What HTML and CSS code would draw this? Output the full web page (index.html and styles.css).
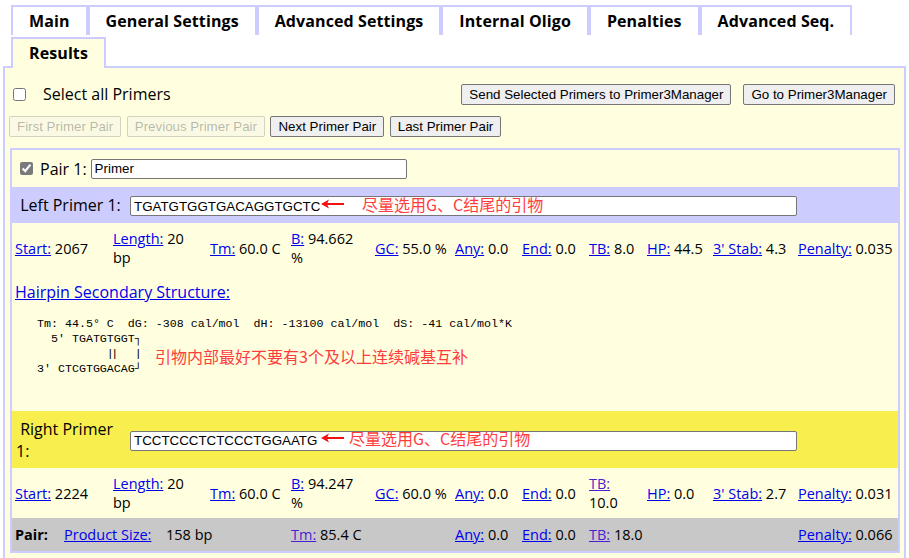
FILE: index.html
```html
<!DOCTYPE html>
<html lang="en">
<head>
<meta charset="utf-8">
<title>Primer3Plus Results</title>
<link rel="stylesheet" href="styles.css">
</head>
<body>
<div class="tabs">
  <div class="tabrow">
    <a class="tab" href="#">Main</a>
    <a class="tab" href="#">General Settings</a>
    <a class="tab" href="#">Advanced Settings</a>
    <a class="tab" href="#">Internal Oligo</a>
    <a class="tab" href="#">Penalties</a>
    <a class="tab" href="#">Advanced Seq.</a>
  </div>
  <div class="tabrow second">
    <a class="tab active" href="#">Results</a>
  </div>
</div>
<div class="panel">
  <div class="toprow">
    <label class="selall"><input type="checkbox" class="cb">Select all Primers</label>
    <div class="mgr">
      <button class="btn">Send Selected Primers to Primer3Manager</button>
      <button class="btn">Go to Primer3Manager</button>
    </div>
  </div>
  <div class="navrow">
    <button class="btn" disabled>First Primer Pair</button>
    <button class="btn" disabled>Previous Primer Pair</button>
    <button class="btn">Next Primer Pair</button>
    <button class="btn">Last Primer Pair</button>
  </div>
  <div class="pairbox">
    <div class="pairhead">
      <input type="checkbox" class="cb gray" checked>
      <span class="pairlbl">Pair 1:</span>
      <input type="text" class="txt name" value="Primer">
    </div>

    <div class="primer leftp">
      <div class="plabel">&nbsp;Left Primer 1:</div>
      <div class="seqwrap">
        <input type="text" class="txt seq" value="TGATGTGGTGACAGGTGCTC">
        <svg class="arrow" width="23" height="10" viewBox="0 0 23 10"><path d="M0 5 L8 0.6 L6.4 4 L23 4 L23 6 L6.4 6 L8 9.4 Z" fill="#f21010"/></svg>
        <span class="note n1">尽量选用G、C结尾的引物</span>
      </div>
    </div>
    <div class="stats">
      <div class="cell"><a href="#">Start:</a> 2067</div>
      <div class="cell"><a href="#">Length:</a> 20<br>bp</div>
      <div class="cell"><a href="#">Tm:</a> 60.0 C</div>
      <div class="cell"><a href="#">B:</a> 94.662<br>%</div>
      <div class="cell"><a href="#">GC:</a> 55.0 %</div>
      <div class="cell"><a href="#">Any:</a> 0.0</div>
      <div class="cell"><a href="#">End:</a> 0.0</div>
      <div class="cell"><a href="#">TB:</a> 8.0</div>
      <div class="cell"><a href="#">HP:</a> 44.5</div>
      <div class="cell"><a href="#">3' Stab:</a> 4.3</div>
      <div class="cell"><a href="#">Penalty:</a> 0.035</div>
    </div>
    <div class="hairpin">
      <a href="#" class="hplink">Hairpin Secondary Structure:</a>
      <div class="prewrap">
<pre class="struct">Tm: 44.5° C  dG: -308 cal/mol  dH: -13100 cal/mol  dS: -41 cal/mol*K
  5' TGATGTGGT┐
          <span class="dbl">||</span>  |
3' CTCGTGGACAG┘</pre>
        <span class="note n3">引物内部最好不要有3个及以上连续碱基互补</span>
      </div>
    </div>

    <div class="primer rightp">
      <div class="plabel">&nbsp;Right Primer<br>1:</div>
      <div class="seqwrap">
        <input type="text" class="txt seq" value="TCCTCCCTCTCCCTGGAATG">
        <svg class="arrow" width="23" height="10" viewBox="0 0 23 10"><path d="M0 5 L8 0.6 L6.4 4 L23 4 L23 6 L6.4 6 L8 9.4 Z" fill="#f21010"/></svg>
        <span class="note n2">尽量选用G、C结尾的引物</span>
      </div>
    </div>
    <div class="stats">
      <div class="cell"><a href="#">Start:</a> 2224</div>
      <div class="cell"><a href="#">Length:</a> 20<br>bp</div>
      <div class="cell"><a href="#">Tm:</a> 60.0 C</div>
      <div class="cell"><a href="#">B:</a> 94.247<br>%</div>
      <div class="cell"><a href="#">GC:</a> 60.0 %</div>
      <div class="cell"><a href="#">Any:</a> 0.0</div>
      <div class="cell"><a href="#">End:</a> 0.0</div>
      <div class="cell"><a href="#" class="vis">TB:</a><br>10.0</div>
      <div class="cell"><a href="#">HP:</a> 0.0</div>
      <div class="cell"><a href="#">3' Stab:</a> 2.7</div>
      <div class="cell"><a href="#">Penalty:</a> 0.031</div>
    </div>
    <div class="pairstats">
      <div class="cell"><b>Pair:</b></div>
      <div class="cell"><a href="#">Product Size:</a></div>
      <div class="cell">158 bp</div>
      <div class="cell"><a href="#" class="vis">Tm:</a> 85.4 C</div>
      <div class="cell"><a href="#">Any:</a> 0.0</div>
      <div class="cell"><a href="#">End:</a> 0.0</div>
      <div class="cell"><a href="#" class="vis">TB:</a> 18.0</div>
      <div class="cell"><a href="#">Penalty:</a> 0.066</div>
    </div>
  </div>
</div>
</body>
</html>
```
FILE: styles.css
```css
* { box-sizing: border-box; }
html, body { margin: 0; padding: 0; }
body {
  background: #fff;
  color: #000;
  font-family: "Open Sans", "Noto Sans CJK SC", sans-serif;
  font-size: 16px;
}
a { color: #0000ee; }
a.vis { color: #4a1fd0; }

/* tabs */
.tabs { padding: 5px 0 0 11px; }
.tabrow { display: flex; }
.tabrow.second { margin-top: 2px; }
.tab {
  display: block;
  height: 30px;
  padding: 0 16px;
  border: 2px solid #ccccff;
  border-bottom: 0;
  background: #fff;
  color: #000;
  font-weight: bold;
  font-size: 16px;
  letter-spacing: 0.1px;
  line-height: 28px;
  text-decoration: none;
}
.tab.active {
  height: 31px;
  background: #ffffe0;
  margin-bottom: -2px;
  position: relative;
  z-index: 1;
}

/* panel */
.panel {
  margin-left: 3px;
  width: 903px;
  border: 2px solid #ccccff;
  background: #ffffe0;
  padding: 0 4px 12px 4px;
}
.toprow {
  display: flex;
  justify-content: space-between;
  align-items: center;
  margin-top: 16px;
  height: 21px;
  padding-right: 5px;
}
.selall { display: flex; align-items: center; line-height: 19px; }
.cb {
  width: 13px;
  height: 13px;
  margin: 0;
}
.selall .cb { margin: 0 17px 0 4px; }
.mgr { display: flex; gap: 12px; }
.btn {
  font-family: "Liberation Sans", Arial, sans-serif;
  font-size: 13.333px;
  height: 21px;
  padding: 0 7px;
  border: 1px solid #767676;
  border-radius: 2px;
  background: #efefef;
  color: #000;
}
.btn:disabled {
  border-color: rgba(118,118,118,0.3);
  background: rgba(239,239,239,0.3);
  color: rgba(16,16,16,0.3);
}
.navrow {
  display: flex;
  gap: 5.5px;
  margin-top: 11px;
}

/* pair box */
.pairbox {
  margin: 11px 0 0 1px;
  border: 2px solid #ccccff;
}
.pairhead {
  display: flex;
  align-items: center;
  height: 37px;
  padding-left: 8px;
}
.cb.gray { accent-color: #7a7a7a; }
.pairlbl { margin: 0 4px 0 7px; }
.txt {
  font-family: "Liberation Sans", Arial, sans-serif;
  font-size: 13.333px;
  height: 20px;
  padding: 1px 3px;
  border: 1px solid #767676;
  border-radius: 2px;
  background: #fff;
  color: #000;
}
.txt.name { width: 316px; }
.txt.seq { width: 667px; }

.primer {
  display: flex;
  align-items: center;
  padding-left: 4px;
}
.primer.leftp { background: #ccccff; height: 36px; }
.primer.rightp { background: #f8ef4e; height: 57px; }
.plabel { width: 114px; line-height: 22px; white-space: nowrap; }
.seqwrap { position: relative; }
.arrow { position: absolute; left: 191px; top: 5px; }
.note {
  position: absolute;
  color: #ff3c3c;
  font-family: "Noto Sans CJK SC", sans-serif;
  font-size: 16px;
  line-height: 20px;
  white-space: nowrap;
}
.n1 { left: 232px; top: 0; }
.n2 { left: 219px; top: 0; }

.stats {
  display: grid;
  grid-template-columns: 98px 97px 81px 84px 80px 67px 67px 58px 66px 85px 1fr;
  align-items: center;
  padding: 6px 0 6px 3px;
  font-size: 14.5px;
  line-height: 19px;
  white-space: nowrap;
}

.hairpin { padding: 8px 0 35px 3px; }
.hplink { line-height: 19px; }
.prewrap { position: relative; margin: 13px 0 0 22px; }
.struct {
  margin: 0;
  font-family: "Liberation Mono", "DejaVu Sans Mono", monospace;
  font-size: 11.65px;
  line-height: 15px;
}
.dbl { letter-spacing: -2.6px; margin-right: 5.2px; }
.n3 { left: 118px; top: 30px; }

.pairstats {
  display: grid;
  grid-template-columns: 49px 102px 125px 164px 67px 67px 209px 1fr;
  align-items: center;
  height: 33px;
  padding-left: 3px;
  background: #c8c8c8;
  font-size: 14.5px;
  white-space: nowrap;
}
```
